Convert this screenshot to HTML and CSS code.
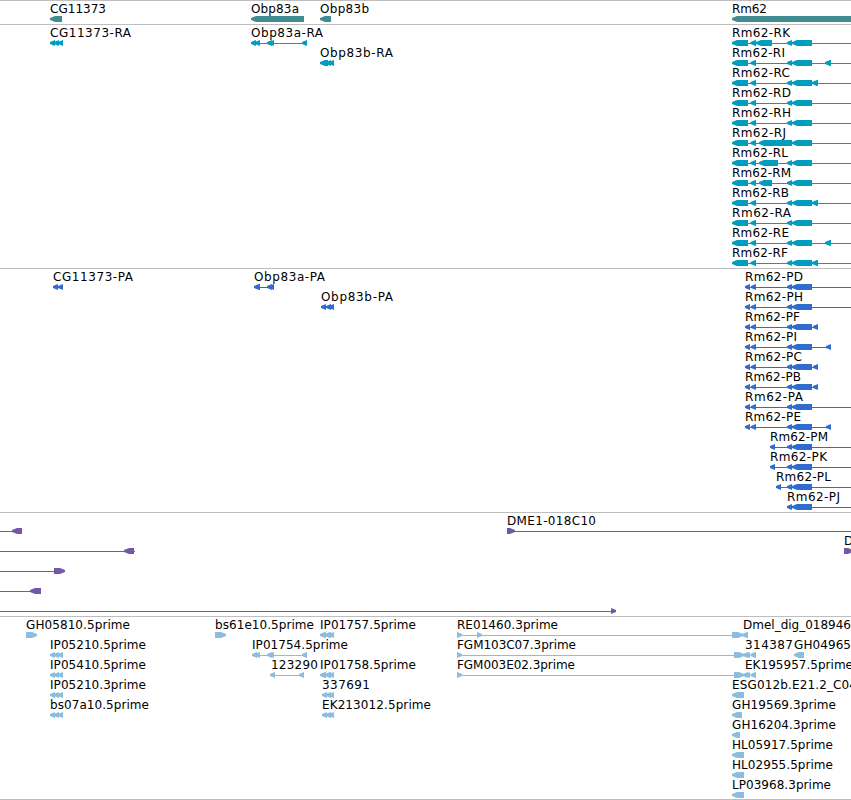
FILE: index.html
```
<!DOCTYPE html>
<html lang="en">
<head>
    <meta charset="UTF-8">
    <title>Genome Browser</title>
    <link rel="stylesheet" href="styles.css">
</head>
<body>
    <main class="browser">
        <section class="track gene" data-track="gene"></section>
        <section class="track transcript" data-track="transcript"></section>
        <section class="track protein" data-track="protein"></section>
        <section class="track bac" data-track="bac"></section>
        <section class="track est" data-track="est"></section>
    </main>
    <script src="tracks.js"></script>
</body>
</html>
```

FILE: styles.css
```
* {
    margin: 0;
    padding: 0;
    box-sizing: border-box;
}
body {
    background-color: #fff;
    overflow: hidden;
}
.browser {
    display: flex;
    flex-direction: column;
    width: 851px;
    height: 800px;
    border-bottom: 1px solid #bebebe;
}
.track {
    flex: none;
    border-top: 1px solid #bebebe;
}
.track:last-child {
    flex: 1;
    min-height: 0;
    overflow: hidden;
}
.track svg {
    display: block;
    width: 100%;
}
.label {
    font-family: "DejaVu Sans", sans-serif;
    font-size: 12px;
    fill: #000;
}
.gene {
    fill: #408c91;
}
.transcript {
    fill: #009dbf;
}
.protein {
    fill: #306bcf;
}
.bac {
    fill: #7458a8;
}
.est {
    fill: #8abddf;
}
```

FILE: tracks.js
```
// feature: [row, label, label x, label width, line (or null), segments]
// segment: [start, end, strand], strand defaults to -1
const rmTail = [[787, 792], [792, 812]];
const three = [[50, 55], [54, 59], [58, 63]];

function rna(row, name, width, extra, end) {
    return [row, 'Rm62-' + name, 732, width, [748, end || 851],
        [[732, 748], [750.5, 756]].concat(extra, [[792, 812]])];
}

function protein(row, name, x, width, end, starts) {
    const segs = starts.map(s => [s, s + 5]).concat(rmTail);
    if (end < 851) {
        segs.push([end - 5, end]);
    }
    return [row, 'Rm62-' + name, x, width, [x, end], segs];
}

const tracks = {
    gene: { rows: 1, features: [
        [0, 'CG11373', 50, 56, null, [[50, 62]]],
        [0, 'Obp83a', 251, 48, null, [[251, 304]]],
        [0, 'Obp83b', 320, 49, null, [[320, 331]]],
        [0, 'Rm62', 732, 35, null, [[732, 860]]]
    ] },
    transcript: { rows: 12, features: [
        [0, 'CG11373-RA', 50, 81, null, three],
        [0, 'Obp83a-RA', 251, 72, [251, 307], [[251, 256], [255, 260], [267, 272], [269, 274], [302, 307]]],
        [1, 'Obp83b-RA', 320, 73, null, [[320, 328], [326, 331], [329, 334]]],
        rna(0, 'RK', 58, [[756, 772], [787, 792]]),
        rna(1, 'RI', 53, [[787, 792], [825, 831]]),
        rna(2, 'RC', 58, [[787, 792], [812, 818]]),
        rna(3, 'RD', 59, [[787, 792]]),
        rna(4, 'RH', 59, [[787, 792]]),
        rna(5, 'RJ', 54, [[759, 792]]),
        rna(6, 'RL', 56, [[759, 778], [787, 792]]),
        rna(7, 'RM', 59, [[759, 772], [787, 792]]),
        rna(8, 'RB', 57, [[787, 792], [812, 818]]),
        rna(9, 'RA', 59, [[787, 792]]),
        rna(10, 'RE', 57, [[787, 792], [825, 831]]),
        rna(11, 'RF', 56, [[787, 792], [812, 818]])
    ] },
    protein: { rows: 12, features: [
        [0, 'CG11373-PA', 53, 80, null, [[53, 58], [58, 63]]],
        [0, 'Obp83a-PA', 254, 71, [254, 274], [[254, 260], [267, 272], [269, 274]]],
        [1, 'Obp83b-PA', 321, 72, null, [[321, 326], [326, 331], [329, 334]]],
        protein(0, 'PD', 745, 58, 851, [745, 751]),
        protein(1, 'PH', 745, 58, 851, [745, 751]),
        protein(2, 'PF', 745, 55, 818, [745, 751]),
        protein(3, 'PI', 745, 52, 831, [745, 751]),
        protein(4, 'PC', 745, 57, 818, [745, 751]),
        protein(5, 'PB', 745, 56, 818, [745, 751]),
        protein(6, 'PA', 745, 58, 851, [745, 751]),
        protein(7, 'PE', 745, 56, 831, [745, 751]),
        protein(8, 'PM', 770, 58, 851, [770]),
        protein(9, 'PK', 770, 57, 851, [770]),
        protein(10, 'PL', 776, 55, 851, [776]),
        protein(11, 'PJ', 787, 53, 851, [])
    ] },
    bac: { rows: 5, features: [
        [0, '', 0, 0, [0, 13], [[12, 22]]],
        [1, '', 0, 0, [0, 135], [[124, 134]]],
        [2, '', 0, 0, [0, 55], [[54, 65, 1]]],
        [3, '', 0, 0, [0, 31], [[30, 41]]],
        [4, '', 0, 0, [0, 612], [[611, 616, 1]]],
        [0, 'DME1-018C10', 507, 89, [512, 851], [[507, 515, 1]]],
        [1, 'D', 844, 9, null, [[844, 853, 1]]]
    ] },
    est: { rows: 9, features: [
        [0, 'GH05810.5prime', 26, 104, null, [[26, 37, 1]]],
        [1, 'IP05210.5prime', 50, 96, null, three],
        [2, 'IP05410.5prime', 50, 96, null, three],
        [3, 'IP05210.3prime', 50, 96, null, three],
        [4, 'bs07a10.5prime', 50, 99, null, three],
        [0, 'bs61e10.5prime', 215, 99, null, [[215, 226, 1]]],
        [1, 'IP01754.5prime', 252, 96, [252, 307], [[252, 257], [255, 260], [267, 272], [269, 274], [302, 307]]],
        [2, '123290', 271, 47, [270, 304], [[270, 275], [299, 304]]],
        [0, 'IP01757.5prime', 320, 96, null, [[320, 326], [325, 331], [329, 334]]],
        [2, 'IP01758.5prime', 320, 96, null, [[320, 326], [325, 331], [329, 334]]],
        [3, '337691', 322, 48, null, [[322, 327], [326, 331], [329, 334]]],
        [4, 'EK213012.5prime', 322, 109, null, [[322, 327], [326, 331], [329, 334]]],
        [0, 'RE01460.3prime', 457, 101, [457, 733], [[457, 462, 1], [477, 482, 1], [732, 743, 1]]],
        [1, 'FGM103C07.3prime', 457, 119, [457, 735], [[457, 462, 1], [734, 744, 1]]],
        [2, 'FGM003E02.3prime', 457, 118, [457, 735], [[457, 462, 1], [734, 744, 1]]],
        [0, 'Dmel_dig_018946', 743, 108, null, [[742, 748]]],
        [1, '314387', 745, 48, null, [[743, 748], [745, 750], [750.5, 756]]],
        [1, 'GH04965', 794, 57, null, [[794, 804]]],
        [2, 'EK195957.5prime', 745, 108, null, [[743, 748], [745, 750], [750.5, 756]]],
        [3, 'ESG012b.E21.2_C04', 732, 125, null, [[732, 744]]],
        [4, 'GH19569.3prime', 732, 104, null, [[732, 742]]],
        [5, 'GH16204.3prime', 732, 104, null, [[732, 740]]],
        [6, 'HL05917.5prime', 732, 101, null, [[732, 744]]],
        [7, 'HL02955.5prime', 732, 101, null, [[732, 744]]],
        [8, 'LP03968.3prime', 732, 99, null, [[732, 744]]]
    ] }
};

function arrow(seg, y) {
    const back = seg[2] === 1 ? seg[0] : seg[1];
    const tip = seg[2] === 1 ? seg[1] : seg[0];
    const dir = seg[2] === 1 ? -1 : 1;
    const neck = tip + dir * Math.min(5, seg[1] - seg[0]);
    return `<polygon points="${tip},${y + 2} ${neck},${y} ${back},${y} ${back},${y + 6} ${neck},${y + 6} ${tip},${y + 4}"/>`;
}

document.querySelectorAll('.track').forEach(section => {
    const track = tracks[section.dataset.track];
    const height = track.rows * 20 + 3;
    let shapes = '';
    track.features.forEach(([row, label, x, width, line, segs]) => {
        const y = row * 20;
        if (line) {
            shapes += `<rect x="${line[0]}" y="${y + 18}" width="${line[1] - line[0]}" height="1"/>`;
        }
        segs.forEach(seg => {
            shapes += arrow(seg, y + 15);
        });
        if (label) {
            shapes += `<text class="label" x="${x}" y="${y + 12}" textLength="${width}">${label}</text>`;
        }
    });
    section.innerHTML = `<svg height="${height}" viewBox="0 0 851 ${height}">${shapes}</svg>`;
});
```
